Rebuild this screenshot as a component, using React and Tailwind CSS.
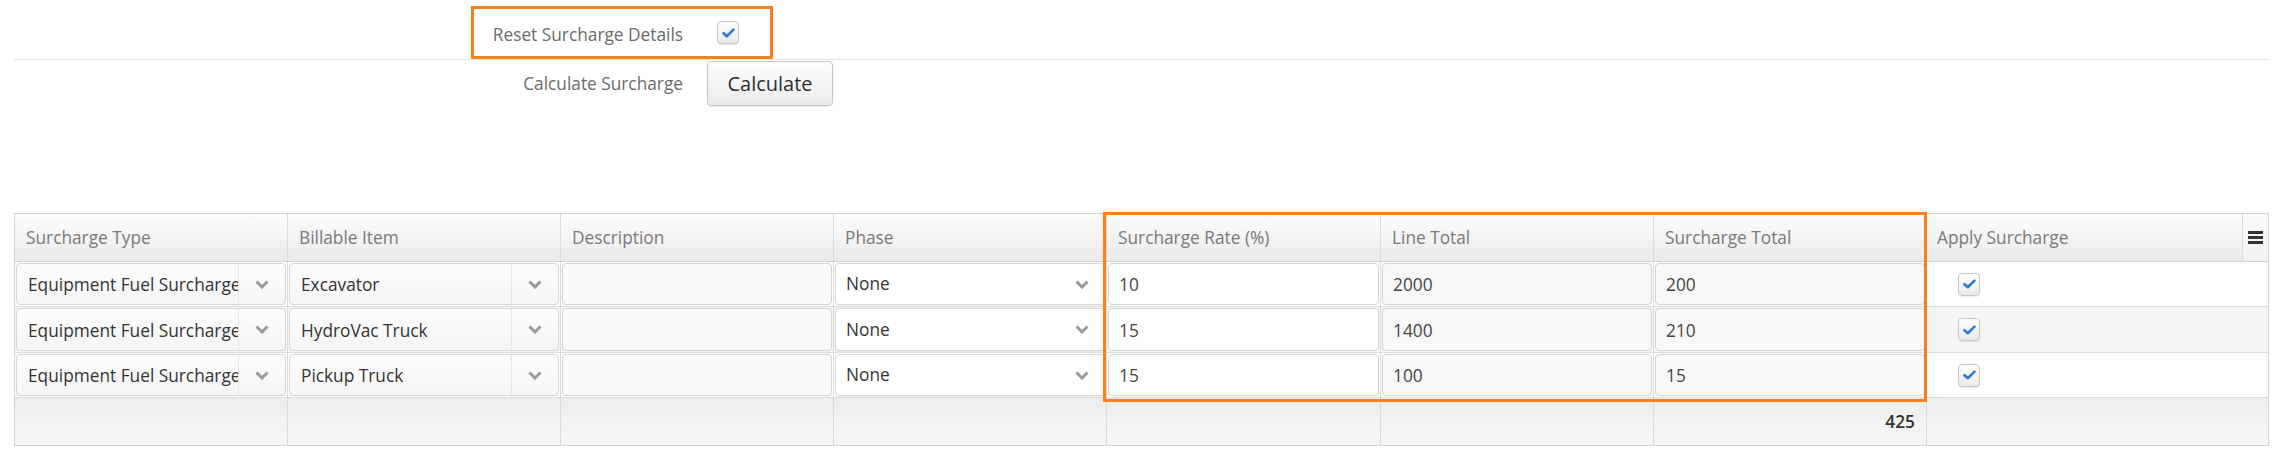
import React from "react";

function Chevron() {
  return (
    <svg width="14" height="9" viewBox="0 0 14 9" className="shrink-0">
      <polyline points="1.5,1.5 7,7 12.5,1.5" fill="none" stroke="#9a9a9a" strokeWidth="3" strokeLinecap="butt" strokeLinejoin="miter" />
    </svg>
  );
}

function CheckBox() {
  return (
    <div className="w-[22px] h-[23px] rounded-[4px] border border-[#c6c6c6] bg-gradient-to-b from-white to-[#eaeaea] flex items-center justify-center shadow-[0_1px_1px_rgba(0,0,0,0.08)]">
      <svg width="13" height="10" viewBox="0 0 13 10">
        <path d="M1.5 5.2 L4.8 8.2 L11.5 1.6" fill="none" stroke="#2b7cd3" strokeWidth="2.6" strokeLinecap="round" strokeLinejoin="round" />
      </svg>
    </div>
  );
}

function DropDown({ value }) {
  return (
    <div className="h-full flex rounded-[4px] border border-[#d6d6d6] bg-gradient-to-b from-[#fdfdfd] to-[#f5f5f5] overflow-hidden">
      <div className="flex-1 min-w-0 pl-[11px] pt-[2px] flex items-center overflow-hidden whitespace-nowrap text-[#333]">
        {value}
      </div>
      <div className="w-[47px] shrink-0 border-l border-[#e6e6e6] flex items-center justify-center">
        <Chevron />
      </div>
    </div>
  );
}

function PhaseBox({ value }) {
  return (
    <div className="h-full flex items-center rounded-[4px] border border-[#d6d6d6] bg-white pl-[10px] pr-[15px] text-[#333] shadow-[0_1px_1px_rgba(0,0,0,0.05)]">
      <span className="flex-1">{value}</span>
      <Chevron />
    </div>
  );
}

function InputBox({ value, gray }) {
  return (
    <div
      className={
        "h-full flex items-center rounded-[4px] border border-[#d4d4d4] pl-[10px] pt-[2px] text-[#444] " +
        (gray ? "bg-[#f8f8f8]" : "bg-white")
      }
    >
      {value}
    </div>
  );
}

const rows = [
  { type: "Equipment Fuel Surcharge", item: "Excavator", rate: "10", line: "2000", total: "200", h: "h-[45px]", alt: false },
  { type: "Equipment Fuel Surcharge", item: "HydroVac Truck", rate: "15", line: "1400", total: "210", h: "h-[46px]", alt: true },
  { type: "Equipment Fuel Surcharge", item: "Pickup Truck", rate: "15", line: "100", total: "15", h: "h-[45px]", alt: false },
];

const headers = ["Surcharge Type", "Billable Item", "Description", "Phase", "Surcharge Rate (%)", "Line Total", "Surcharge Total"];

export default function App() {
  return (
    <div className="w-[2284px] h-[467px] bg-white font-['Open_Sans',sans-serif] text-[17.3px] leading-none">
      <div className="pl-[14px] pr-[15px] pt-[6px]">
        {/* Reset Surcharge Details row */}
        <div className="flex">
          <div className="ml-[457px] w-[302px] h-[53px] border-[3px] border-[#f5821f] flex items-center">
            <div className="w-[209px] text-right text-[#6b6b6b] pt-[4px] whitespace-nowrap">Reset Surcharge Details</div>
            <div className="ml-[34px]">
              <CheckBox />
            </div>
          </div>
        </div>
        <div className="h-px bg-[#e4e4e4]" />
        {/* Calculate row */}
        <div className="flex items-center mt-px">
          <div className="w-[669px] text-right text-[#6b6b6b]">Calculate Surcharge</div>
          <button className="ml-[24px] w-[126px] h-[45px] rounded-[4px] border border-[#c4c4c4] bg-gradient-to-b from-[#fdfdfd] to-[#ececec] text-[20px] text-[#2e2e2e] shadow-[0_1px_1px_rgba(0,0,0,0.08)]">
            Calculate
          </button>
        </div>

        {/* Grid */}
        <div className="relative mt-[107px] border border-[#d4d4d4]">
          {/* header */}
          <div className="grid grid-cols-[272px_273px_273px_273px_274px_273px_273px_1fr] h-[48px] border-b border-[#d0d0d0] bg-gradient-to-b from-[#fcfcfc] to-[#ebebeb] text-[#7a7a7a]">
            {headers.map((h, i) => (
              <div key={h} className={"flex items-center px-[11px] whitespace-nowrap " + (i > 0 ? "border-l border-[#dadada]" : "")}>
                {h}
              </div>
            ))}
            <div className="flex border-l border-[#dadada]">
              <div className="flex-1 flex items-center px-[10px]">Apply Surcharge</div>
              <div className="w-[26px] border-l border-[#dadada] bg-gradient-to-b from-[#fbfbfb] to-[#f1f1f1] flex flex-col items-center justify-center gap-[2px] pb-[1px]">
                <div className="w-[15px] h-[3px] bg-[#333]" />
                <div className="w-[15px] h-[3px] bg-[#333]" />
                <div className="w-[15px] h-[3px] bg-[#333]" />
              </div>
            </div>
          </div>

          {/* body rows */}
          {rows.map((r, idx) => (
            <div
              key={idx}
              className={
                "grid grid-cols-[272px_273px_273px_273px_274px_273px_273px_1fr] border-b border-[#dcdcdc] " +
                r.h +
                (r.alt ? " bg-[#f5f5f5]" : " bg-white")
              }
            >
              <div className="p-px">
                <DropDown value={r.type} />
              </div>
              <div className="p-px border-l border-[#dcdcdc]">
                <DropDown value={r.item} />
              </div>
              <div className="p-px border-l border-[#dcdcdc]">
                <div className="h-full rounded-[4px] border border-[#d4d4d4] bg-[#fafafa]" />
              </div>
              <div className="p-px border-l border-[#dcdcdc]">
                <PhaseBox value="None" />
              </div>
              <div className="p-px border-l border-[#dcdcdc]">
                <InputBox value={r.rate} />
              </div>
              <div className="p-px border-l border-[#dcdcdc]">
                <InputBox value={r.line} gray />
              </div>
              <div className="p-px border-l border-[#dcdcdc]">
                <InputBox value={r.total} gray />
              </div>
              <div className="border-l border-[#dcdcdc] flex items-center pl-[31px]">
                <CheckBox />
              </div>
            </div>
          ))}

          {/* footer */}
          <div className="grid grid-cols-[272px_273px_273px_273px_274px_273px_273px_1fr] h-[47px] bg-gradient-to-b from-[#ededed] to-[#f7f7f7]">
            <div />
            <div className="border-l border-[#dadada]" />
            <div className="border-l border-[#dadada]" />
            <div className="border-l border-[#dadada]" />
            <div className="border-l border-[#dadada]" />
            <div className="border-l border-[#dadada]" />
            <div className="border-l border-[#dadada] flex items-center justify-end pr-[11px] font-semibold text-[#333]">425</div>
            <div className="border-l border-[#dadada]" />
          </div>

          {/* highlight annotation */}
          <div className="absolute left-[1088px] top-[-2px] w-[824px] h-[190px] border-[3px] border-[#f5821f] pointer-events-none" />
        </div>
      </div>
    </div>
  );
}
